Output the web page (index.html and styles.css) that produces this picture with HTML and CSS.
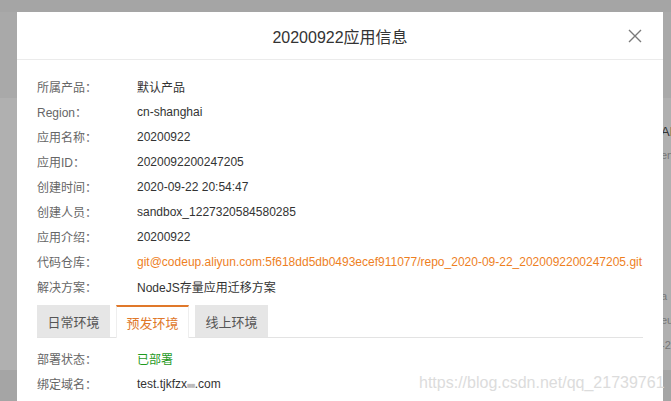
FILE: index.html
```html
<!DOCTYPE html>
<html lang="zh">
<head>
<meta charset="utf-8">
<link rel="stylesheet" href="styles.css">
</head>
<body>
<div class="backdrop">
  <div class="bg-band band-a"></div>
  <div class="bg-band band-b"></div>
  <span class="peek peek-1">AP</span>
  <span class="peek peek-2">en</span>
  <span class="peek peek-3">a</span>
  <span class="peek peek-4">eu</span>
  <span class="peek peek-5">-2</span>
</div>
<div class="modal">
  <div class="modal-header">
    <div class="modal-title">20200922应用信息</div>
    <svg class="close" width="14" height="14" viewBox="0 0 14 14"><path d="M1 1L13 13M13 1L1 13" stroke="#7a7a7a" stroke-width="1.4" fill="none"/></svg>
  </div>
  <div class="modal-body">
    <div class="row"><span class="label">所属产品：</span><span class="value">默认产品</span></div>
    <div class="row"><span class="label">Region：</span><span class="value">cn-shanghai</span></div>
    <div class="row"><span class="label">应用名称：</span><span class="value">20200922</span></div>
    <div class="row"><span class="label">应用ID：</span><span class="value">2020092200247205</span></div>
    <div class="row"><span class="label">创建时间：</span><span class="value">2020-09-22 20:54:47</span></div>
    <div class="row"><span class="label">创建人员：</span><span class="value">sandbox_1227320584580285</span></div>
    <div class="row"><span class="label">应用介绍：</span><span class="value">20200922</span></div>
    <div class="row"><span class="label">代码仓库：</span><span class="value link">git@codeup.aliyun.com:5f618dd5db0493ecef911077/repo_2020-09-22_2020092200247205.git</span></div>
    <div class="row"><span class="label">解决方案：</span><span class="value">NodeJS存量应用迁移方案</span></div>
    <div class="tabs">
      <div class="tab">日常环境</div>
      <div class="tab active">预发环境</div>
      <div class="tab">线上环境</div>
    </div>
    <div class="row row-first"><span class="label">部署状态：</span><span class="value ok">已部署</span></div>
    <div class="row"><span class="label">绑定域名：</span><span class="value">test.tjkfzx<span class="blur">■■</span>.com</span></div>
  </div>
  <div class="watermark">https://blog.csdn.net/qq_21739761</div>
</div>
</body>
</html>
```
FILE: styles.css
```css
html, body {
  margin: 0;
  padding: 0;
  width: 671px;
  height: 401px;
  overflow: hidden;
  background: #a7a7a7;
  font-family: "Liberation Sans", "Noto Sans CJK SC", sans-serif;
}
.backdrop {
  position: absolute;
  inset: 0;
  background: #a5a5a5;
}
.bg-band {
  position: absolute;
  left: 0;
  right: 0;
}
.band-a {
  top: 12px;
  height: 86px;
  background: #a9a9a9;
}
.band-b {
  top: 98px;
  height: 272px;
  background: #b0b0b0;
}
.peek {
  position: absolute;
  left: 661px;
  font-size: 11px;
  color: #555;
}
.peek-1 { top: 124px; font-size: 13px; color: #333; }
.peek-2 { top: 149px; color: #777; }
.peek-3 { top: 290px; color: #777; }
.peek-4 { top: 314px; color: #777; }
.peek-5 { top: 339px; color: #777; }
.modal {
  position: absolute;
  left: 17px;
  top: 12px;
  width: 646px;
  height: 400px;
  background: #fff;
}
.modal-header {
  height: 47px;
  border-bottom: 1px solid #ebebeb;
  display: flex;
  align-items: center;
  justify-content: center;
  position: relative;
}
.modal-title {
  font-size: 16px;
  color: #333;
  margin-top: 1px;
}
.close {
  position: absolute;
  right: 21px;
  top: 17px;
}
.modal-body {
  padding: 14px 20px 0 20px;
}
.row {
  height: 25px;
  display: flex;
  align-items: center;
  font-size: 12px;
}
.label {
  width: 100px;
  color: #666;
  flex: none;
}
.value {
  color: #333;
  white-space: nowrap;
}
.link { color: #ee7f1f; }
.ok { color: #1f9a1f; }
.blur { color: #bbb; font-size: 8px; letter-spacing: -1px; }
.tabs {
  display: flex;
  gap: 6px;
  margin-top: 6px;
  border-bottom: 1px solid #e3e3e3;
  height: 32px;
}
.tab {
  width: 73px;
  height: 32px;
  box-sizing: border-box;
  background: #e6e6e6;
  color: #555;
  font-size: 13px;
  display: flex;
  align-items: center;
  justify-content: center;
}
.tab.active {
  background: #fff;
  border-top: 2px solid #e0782a;
  border-left: 1px solid #eee;
  border-right: 1px solid #eee;
  color: #e0782a;
  height: 33px;
}
.row-first { margin-top: 8px; }
.watermark {
  position: absolute;
  left: 402px;
  top: 362px;
  font-size: 16px;
  color: #dcdcdc;
  white-space: nowrap;
}
```
